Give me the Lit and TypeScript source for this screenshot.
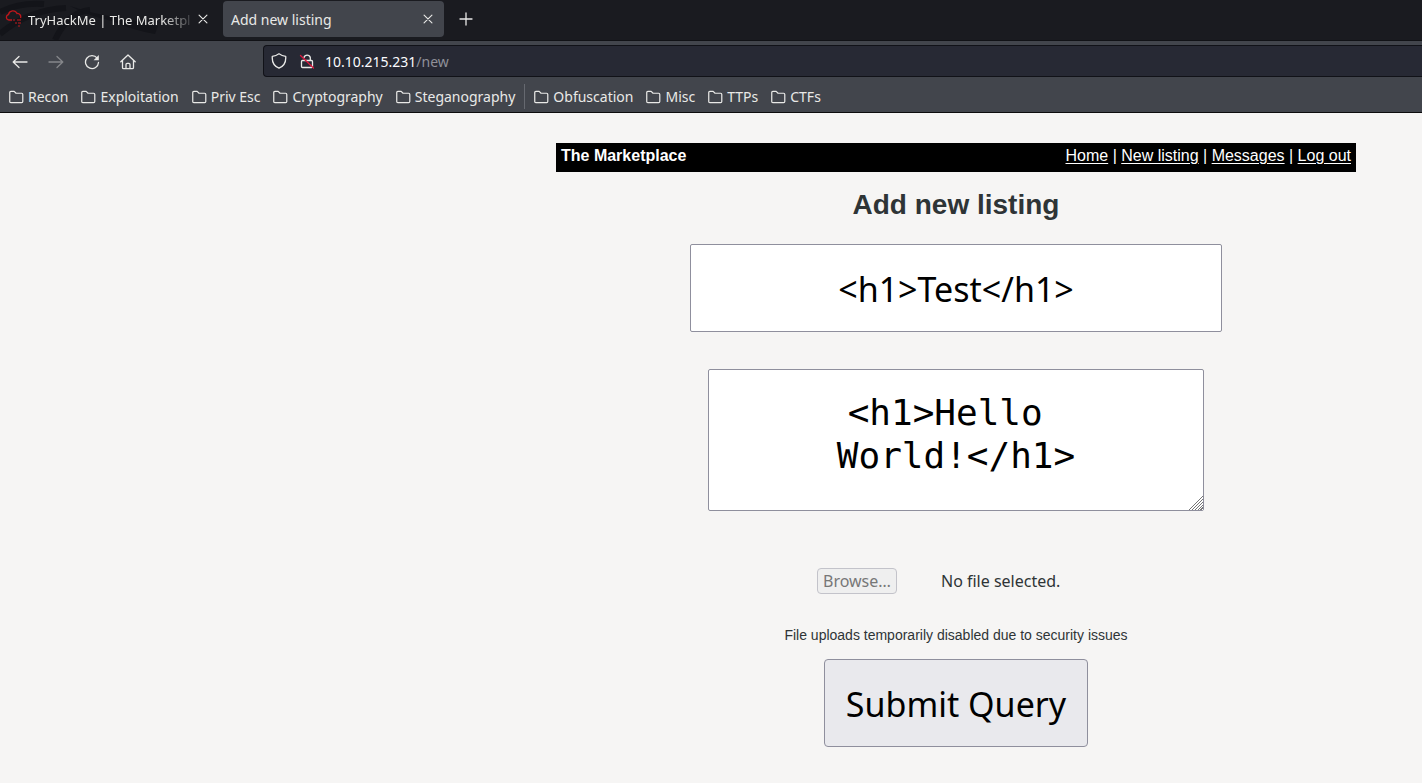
import { LitElement, html, css, svg } from "lit";
import { customElement, property } from "lit/decorators.js";

const glyphs: Record<string, unknown> = {
  close: svg`<path d="M3.500 3.500l9 9M12.500 3.500l-9 9"/>`,
  plus: svg`<path d="M8 2v12M2 8h12"/>`,
  back: svg`<path d="M15 8H1.500M7 2.500L1.200 8L7 13.500"/>`,
  forward: svg`<path d="M1 8h13.500M9 2.500l5.800 5.500L9 13.500"/>`,
  reload: svg`<path d="M13.200 4.200A6.500 6.500 0 1 0 14.500 8.500"/><path d="M14.800 1v5.200H9.600z" fill="currentColor" stroke="none"/>`,
  home: svg`<path d="M.8 7.800L8 1l7.200 6.800M2.500 6.500V13.500q0 1.200 1.200 1.200H12.300q1.200 0 1.200-1.200V6.500M6 14.500V10.500q0-1.200 1.200-1.200h1.600q1.200 0 1.200 1.200v4"/>`,
  shield: svg`<path d="M8 .8q3 2.200 6.700 2.600C15.200 9.500 12 13.500 8 15.200C4 13.500 .8 9.500 1.300 3.400Q5 3 8 .8z"/>`,
  lock: svg`<path d="M5 4.500a3.300 3.300 0 0 1 6.300 0V7.500M3.500 7.500h9q1 0 1 1v5q0 1-1 1h-9q-1 0-1-1v-5q0-1 1-1z"/><path class="slash" d="M1.500 2.500l13 12.500"/>`,
  folder: svg`<path d="M.8 12.800V3.200q0-1.200 1.200-1.200H5.500l2 2H13.500q1.200 0 1.200 1.200V12.800q0 1.200-1.200 1.200H2q-1.200 0-1.200-1.200z"/>`,
};

@customElement("ui-icon")
export class UiIcon extends LitElement {
  @property() name = "folder";
  static styles = css`
    :host { display: block; flex: none; width: 16px; height: 16px; }
    svg { display: block; width: 100%; height: 100%; fill: none; stroke: currentColor; stroke-width: 1.3; stroke-linejoin: round; stroke-linecap: round; }
    .slash { stroke: #e0183f; }
  `;
  render() {
    return html`<svg viewBox="0 0 16 16" aria-hidden="true">${glyphs[this.name]}</svg>`;
  }
}

@customElement("browser-chrome")
export class BrowserChrome extends LitElement {
  static styles = css`
    :host { display: block; font: 14px/20px "Noto Sans", sans-serif; color: #e9e9e7; background: #42454c; border-bottom: 1px solid #0c0c0d; }
    button { appearance: none; border: 0; padding: 0; background: none; color: inherit; font: inherit; }
    .tabs { position: relative; box-sizing: border-box; display: flex; align-items: center; height: 41px; padding-bottom: 2px; background: #1a1b20; border-bottom: 1px solid #111216; overflow: hidden; }
    .art { position: absolute; left: 0; top: 0; width: 240px; height: 40px; }
    .tab { position: relative; box-sizing: border-box; display: flex; align-items: center; height: 36px; border-radius: 4px; }
    .first { width: 219px; padding: 0 9px 0 4px; }
    .active { width: 221px; margin-left: 4px; padding: 0 9px 0 8px; background: #42454c; }
    .title { flex: 1; padding-top: 2px; white-space: nowrap; }
    .first .title { margin-left: 4px; font-size: 13px; -webkit-mask-image: linear-gradient(90deg, #000 80%, transparent); mask-image: linear-gradient(90deg, #000 80%, transparent); }
    .cloud { width: 20px; height: 18px; flex: none; }
    .close ui-icon { width: 14px; height: 14px; }
    .new { margin-left: 14px; }
    .nav { display: flex; align-items: center; height: 40px; padding-left: 12px; }
    .buttons { display: flex; gap: 20px; width: 251px; padding-top: 2px; }
    .off { opacity: .4; }
    .url { flex: 1; display: flex; align-items: center; height: 30px; border: 1px solid #111218; border-right: 0; border-radius: 4px 0 0 4px; background: #272934; padding-left: 7px; gap: 12px; }
    .address { flex: 1; margin-left: -2px; padding-top: 2px; color: #fbfbfe; }
    .path { color: #8f9099; }
    .marks { display: flex; align-items: center; height: 31px; padding-left: 9px; gap: 13px; }
    .mark { display: flex; align-items: center; gap: 4px; white-space: nowrap; color: inherit; text-decoration: none; }
    .mark ui-icon { width: 15px; height: 16px; }
    .rule { width: 1px; height: 25px; background: #666970; margin: 0 -4px; }
  `;
  mark(label: string) {
    return html`<a class="mark" href="#"><ui-icon name="folder"></ui-icon>${label}</a>`;
  }
  render() {
    return html`
      <div class="tabs" role="tablist">
        <svg class="art" viewBox="0 0 240 40" fill="none" stroke="#131419" stroke-width="6" aria-hidden="true">
          <path d="M0 34Q28 10 66 8M0 12Q20 2 44 4M55 40Q68 12 90 10"/><path d="M54 0Q88 14 122 18L158 26L155 34Q132 30 112 21Q88 16 70 6z" fill="#131419" stroke="none"/>
        </svg>
        <div class="tab first" role="tab">
          <svg class="cloud" viewBox="0 0 20 18" fill="none" stroke="#c0161b" stroke-width="1.300" aria-hidden="true">
            <path d="M8 10H5a2.800 2.800 0 0 1-.5-5.500A4.500 4.500 0 0 1 13 3.500a3.300 3.300 0 0 1 3.500 4.500"/><path d="M9 10h2M13 10h4M11 13h2M14 13h3M14 16h2" stroke="#8a181d"/>
          </svg>
          <span class="title">TryHackMe | The Marketpl</span>
          <button class="close" aria-label="Close tab"><ui-icon name="close"></ui-icon></button>
        </div>
        <div class="tab active" role="tab" aria-selected="true">
          <span class="title">Add new listing</span>
          <button class="close" aria-label="Close tab"><ui-icon name="close"></ui-icon></button>
        </div>
        <button class="new" aria-label="New tab"><ui-icon name="plus"></ui-icon></button>
      </div>
      <div class="nav">
        <div class="buttons">
          <button aria-label="Back"><ui-icon name="back"></ui-icon></button>
          <button class="off" aria-label="Forward" disabled><ui-icon name="forward"></ui-icon></button>
          <button aria-label="Reload"><ui-icon name="reload"></ui-icon></button>
          <button aria-label="Home"><ui-icon name="home"></ui-icon></button>
        </div>
        <div class="url">
          <ui-icon name="shield"></ui-icon><ui-icon name="lock"></ui-icon>
          <div class="address" role="textbox" aria-label="Address" contenteditable="true">10.10.215.231<span class="path">/new</span></div>
        </div>
      </div>
      <nav class="marks" aria-label="Bookmarks">
        ${["Recon", "Exploitation", "Priv Esc", "Cryptography", "Steganography"].map((m) => this.mark(m))}
        <span class="rule"></span>
        ${["Obfuscation", "Misc", "TTPs", "CTFs"].map((m) => this.mark(m))}
      </nav>
    `;
  }
}

@customElement("app-root")
export class AppRoot extends LitElement {
  static styles = css`
    :host { display: flex; flex-direction: column; min-height: 100vh; background: #f6f5f4; color: #2e3436; font: 16px/18px "Liberation Sans", Arial, sans-serif; }
    main { box-sizing: border-box; width: 100%; max-width: 866px; margin-left: auto; padding: 30px 66px 36px 0; }
    header { box-sizing: border-box; display: flex; justify-content: space-between; height: 29px; padding: 4px 5px; background: #000; color: #fff; }
    header a { color: #fff; text-underline-offset: 2px; }
    h1 { margin: 17px 0 23px; font-size: 28px; line-height: 32px; text-align: center; }
    form { display: flex; flex-direction: column; align-items: center; }
    input, textarea, button { box-sizing: border-box; margin: 0; border: 1px solid #8f8f9d; border-radius: 2px; color: #000; text-align: center; }
    .title { width: 532px; max-width: 100%; height: 88px; padding: 2px 18px 0; background: #fff; font: 34px/44px "Noto Sans", sans-serif; }
    .body { width: 496px; max-width: 100%; height: 142px; margin-top: 37px; padding: 21px 80px; background: #fff; font: 36px/43px "DejaVu Sans Mono", monospace; white-space: break-spaces; resize: both; overflow: hidden; }
    .body::-webkit-resizer { background: linear-gradient(135deg, #fff 50%, transparent 50%), repeating-linear-gradient(135deg, #fff 0 1px, #777 1px 2px); }
    .file { width: 278px; height: 26px; margin: 57px 0 0; display: flex; gap: 44px; align-items: center; font: 16px/24px "Noto Sans", sans-serif; white-space: nowrap; }
    .browse { height: 26px; padding: 0 5px; border-color: #c3c3ca; border-radius: 4px; background: #efefef; color: #777; font: inherit; }
    .note { margin: 32px 0 15px; font-size: 14px; line-height: 18px; }
    .submit { width: 264px; height: 88px; padding: 2px 0 0; border-radius: 4px; background: #e9e9ed; font: 34px/44px "Noto Sans", sans-serif; }
  `;
  render() {
    return html`
      <browser-chrome></browser-chrome>
      <main>
        <header>
          <b>The Marketplace</b>
          <nav><a href="#">Home</a> | <a href="#">New listing</a> | <a href="#">Messages</a> | <a href="#">Log out</a></nav>
        </header>
        <h1>Add new listing</h1>
        <form @submit=${(e: Event) => e.preventDefault()}>
          <input class="title" aria-label="Title" .value=${"<h1>Test</h1>"}>
          <textarea class="body" aria-label="Description" .value=${"<h1>Hello World!</h1>"}></textarea>
          <div class="file"><button class="browse" type="button" disabled>Browse…</button><span>No file selected.</span></div>
          <p class="note">File uploads temporarily disabled due to security issues</p>
          <button class="submit">Submit Query</button>
        </form>
      </main>
    `;
  }
}
